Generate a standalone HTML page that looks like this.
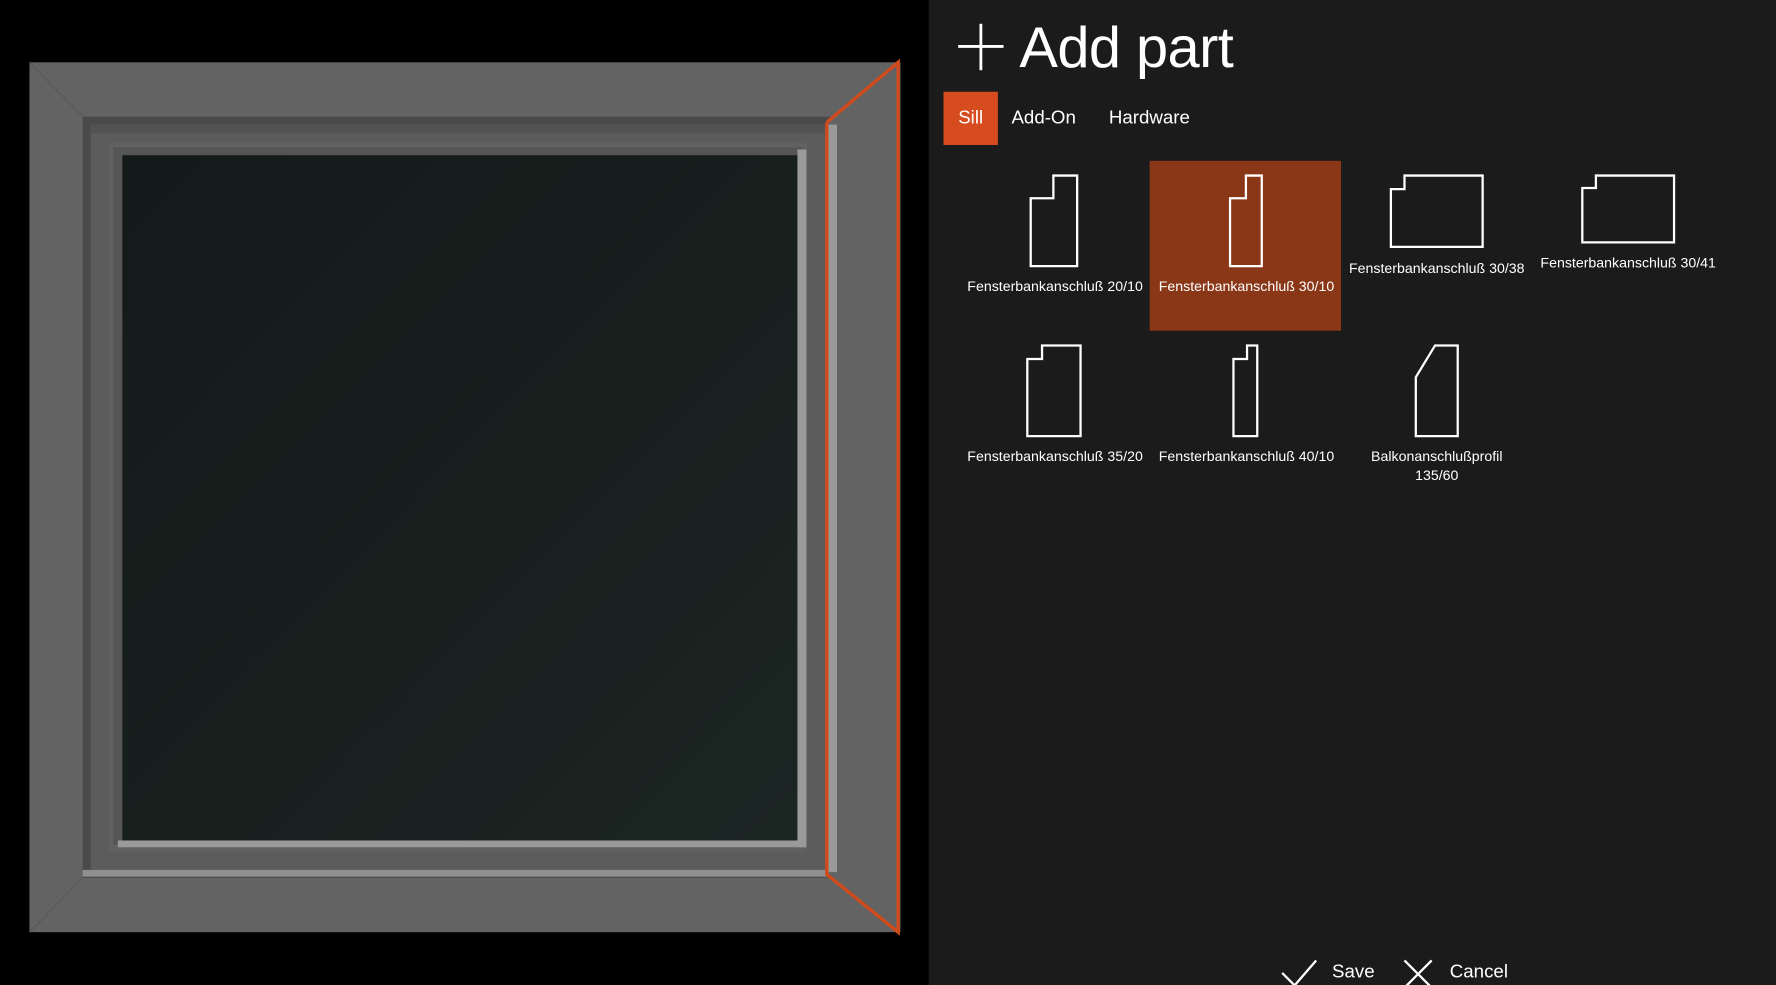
<!DOCTYPE html>
<html><head><meta charset="utf-8"><style>
html,body{margin:0;padding:0;background:#000;width:1776px;height:985px;overflow:hidden}
#s{position:absolute;left:0;top:0;width:1568px;height:870px;transform:scale(1.13265);transform-origin:0 0;font-family:"Liberation Sans",sans-serif;color:#fff}
#r{position:absolute;left:820px;top:0;width:748px;height:870px;background:#1b1b1b}
.t{position:absolute;white-space:nowrap}
.lbl{position:absolute;width:169px;text-align:center;font-size:12.5px;line-height:17px;margin-left:-84px}
</style></head><body><div id="s">
<svg width="820" height="870" style="position:absolute;left:0;top:0">
<defs><linearGradient id="g" x1="0" y1="0" x2="1" y2="1"><stop offset="0" stop-color="#141a1a"/><stop offset="1" stop-color="#1b2522"/></linearGradient></defs>
<rect width="820" height="870" fill="#000"/>
<rect x="26" y="55" width="769" height="768" fill="#636363"/>
<line x1="26" y1="55" x2="73" y2="103" stroke="#585858" stroke-width="1"/>
<line x1="26" y1="823" x2="73" y2="775" stroke="#585858" stroke-width="1"/>
<rect x="73" y="103" width="662" height="672" fill="#4a4a4a"/>
<rect x="80" y="110" width="650" height="660" fill="#5c5c5c"/>
<rect x="80" y="110" width="650" height="8" fill="#535353"/>
<rect x="96" y="126" width="616" height="626" fill="#616161"/>
<rect x="100" y="130" width="608" height="616" fill="#555"/>
<rect x="704" y="132" width="8" height="616" fill="#9a9a9a"/>
<rect x="104" y="742" width="608" height="6" fill="#9a9a9a"/>
<rect x="108" y="137" width="596" height="605" fill="url(#g)"/>
<rect x="73" y="768" width="662" height="6" fill="#8f8f8f"/>
<polygon points="730,108 793,55 793,823 730,772" fill="#636363"/>
<rect x="731" y="110" width="8" height="660" fill="#9a9a9a"/>
<polyline points="730,108 793,55 793,823 730,772 730,108" fill="none" stroke="#d04a1c" stroke-width="3"/>
</svg>
<div id="r"></div>
<svg width="1568" height="870" style="position:absolute;left:0;top:0">
<line x1="846" y1="41" x2="886" y2="41" stroke="#fff" stroke-width="2.5"/>
<line x1="866" y1="21" x2="866" y2="62" stroke="#fff" stroke-width="2.5"/>
<rect x="833" y="81" width="48" height="47" fill="#d64c1f"/>
<rect x="1015" y="142" width="169" height="150" fill="#8a3718"/>
<g fill="none" stroke="#fff" stroke-width="2">
<path d="M930 155H951V235H910V175H930Z"/>
<path d="M1100 155H1114V235H1086V175H1100Z"/>
<path d="M1240 155H1309V218H1228V167H1240Z"/>
<path d="M1409 155H1478V214H1397V166H1409Z"/>
<path d="M920 305H954V385H907V317H920Z"/>
<path d="M1101 305H1110V385H1089V317H1101Z"/>
<path d="M1267 305H1287V385H1250V333Z"/>
<path d="M1132 859L1143 870L1162 848"/>
<path d="M1240 848L1264 872M1264 848L1240 872"/>
</g>
</svg>
<div class="t" style="left:900px;top:12px;font-size:51px;font-weight:300;letter-spacing:-0.5px">Add part</div>
<div class="t" style="left:846px;top:95px;font-size:16.5px">Sill</div>
<div class="t" style="left:893px;top:95px;font-size:16.5px">Add-On</div>
<div class="t" style="left:979px;top:95px;font-size:16.5px">Hardware</div>
<div class="lbl" style="left:931px;top:245px">Fensterbankanschluß 20/10</div>
<div class="lbl" style="left:1100px;top:245px">Fensterbankanschluß 30/10</div>
<div class="lbl" style="left:1268px;top:229px">Fensterbankanschluß 30/38</div>
<div class="lbl" style="left:1437px;top:224px">Fensterbankanschluß 30/41</div>
<div class="lbl" style="left:931px;top:395px">Fensterbankanschluß 35/20</div>
<div class="lbl" style="left:1100px;top:395px">Fensterbankanschluß 40/10</div>
<div class="lbl" style="left:1268px;top:395px">Balkonanschlußprofil<br>135/60</div>
<div class="t" style="left:1176px;top:849px;font-size:16.5px">Save</div>
<div class="t" style="left:1280px;top:849px;font-size:16.5px">Cancel</div>
</div></body></html>
